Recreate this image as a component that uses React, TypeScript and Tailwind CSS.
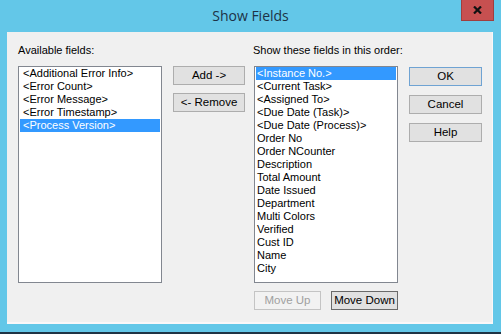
import React from "react";

const font = { fontFamily: '"Liberation Sans", Arial, sans-serif' };

const leftItems = [
  "<Additional Error Info>",
  "<Error Count>",
  "<Error Message>",
  "<Error Timestamp>",
  "<Process Version>",
];

const rightItems = [
  "<Instance No.>",
  "<Current Task>",
  "<Assigned To>",
  "<Due Date (Task)>",
  "<Due Date (Process)>",
  "Order No",
  "Order NCounter",
  "Description",
  "Total Amount",
  "Date Issued",
  "Department",
  "Multi Colors",
  "Verified",
  "Cust ID",
  "Name",
  "City",
];

function ListBox({ items, selected, pad }: { items: string[]; selected: number; pad: string }) {
  return (
    <div className="w-[144px] h-[217px] bg-white border border-[#828790] pt-0 flex flex-col">
      {items.map((t, i) => (
        <div
          key={t}
          className={
            "h-[13px] leading-[13px] text-[11px] mx-[1px] whitespace-nowrap " +
            pad +
            (i === selected ? " bg-[#3399ff] text-white" : " text-black")
          }
        >
          {t}
        </div>
      ))}
    </div>
  );
}

function Btn({ children, w, variant }: { children: React.ReactNode; w: string; variant?: "default" | "disabled" | "focus" }) {
  let cls = "bg-[#e1e1e1] border-[#adadad] text-black";
  if (variant === "default") cls = "bg-[#e1e1e1] border-[#6fa3d3] text-black";
  if (variant === "disabled") cls = "bg-[#f2f2f2] border-[#c4c4c4] text-[#a0a0a0]";
  if (variant === "focus") cls = "bg-[#e1e1e1] border-[#6a6a6a] text-black";
  return (
    <div className={"h-[19px] border flex items-center justify-center text-[11.5px] leading-none " + w + " " + cls}>
      {children}
    </div>
  );
}

export default function App() {
  return (
    <div className="w-[501px] h-[334px] bg-[#63c7e8] flex flex-col border-b-2 border-[#1f3344]" style={font}>
      <div className="h-[32px] relative flex items-center justify-center shrink-0">
        <span className="text-[14px] text-[#1d3246] mt-[-1px]" style={{ fontFamily: '"Open Sans", "Liberation Sans", sans-serif', fontSize: "14px" }}>
          Show Fields
        </span>
        <div className="absolute top-0 right-[7px] w-[33px] h-[21px] bg-[#c75050] border-l border-b border-r border-[#a03e3e] flex items-center justify-center">
          <svg width="9" height="8" viewBox="0 0 9 8">
            <path d="M1 0.5 L8 7.5 M8 0.5 L1 7.5" stroke="#111" strokeWidth="2.2" />
          </svg>
        </div>
      </div>
      <div className="ml-[7px] mr-[8px] h-[292px] bg-[#f0f0f0] border-r border-b-2 border-[#f9f7f9] flex flex-col pl-[11px] pt-[11px]">
        <div className="flex h-[14px] items-center text-[11px] text-black leading-[14px]">
          <div className="w-[235px]">Available fields:</div>
          <div>Show these fields in this order:</div>
        </div>
        <div className="flex items-start mt-[9px]">
          <ListBox items={leftItems} selected={4} pad="pl-[3px]" />
          <div className="ml-[11px] flex flex-col gap-[8px]">
            <Btn w="w-[72px]">Add -&gt;</Btn>
            <Btn w="w-[72px]">&lt;- Remove</Btn>
          </div>
          <div className="ml-[9px] flex flex-col">
            <ListBox items={rightItems} selected={0} pad="pl-[1px]" />
            <div className="flex mt-[8px] gap-[10px]">
              <Btn w="w-[67px]" variant="disabled">Move Up</Btn>
              <Btn w="w-[67px]" variant="focus">Move Down</Btn>
            </div>
          </div>
          <div className="ml-[11px] mt-[1px] flex flex-col gap-[9px]">
            <Btn w="w-[73px]" variant="default">OK</Btn>
            <Btn w="w-[73px]">Cancel</Btn>
            <Btn w="w-[73px]">Help</Btn>
          </div>
        </div>
      </div>
    </div>
  );
}
